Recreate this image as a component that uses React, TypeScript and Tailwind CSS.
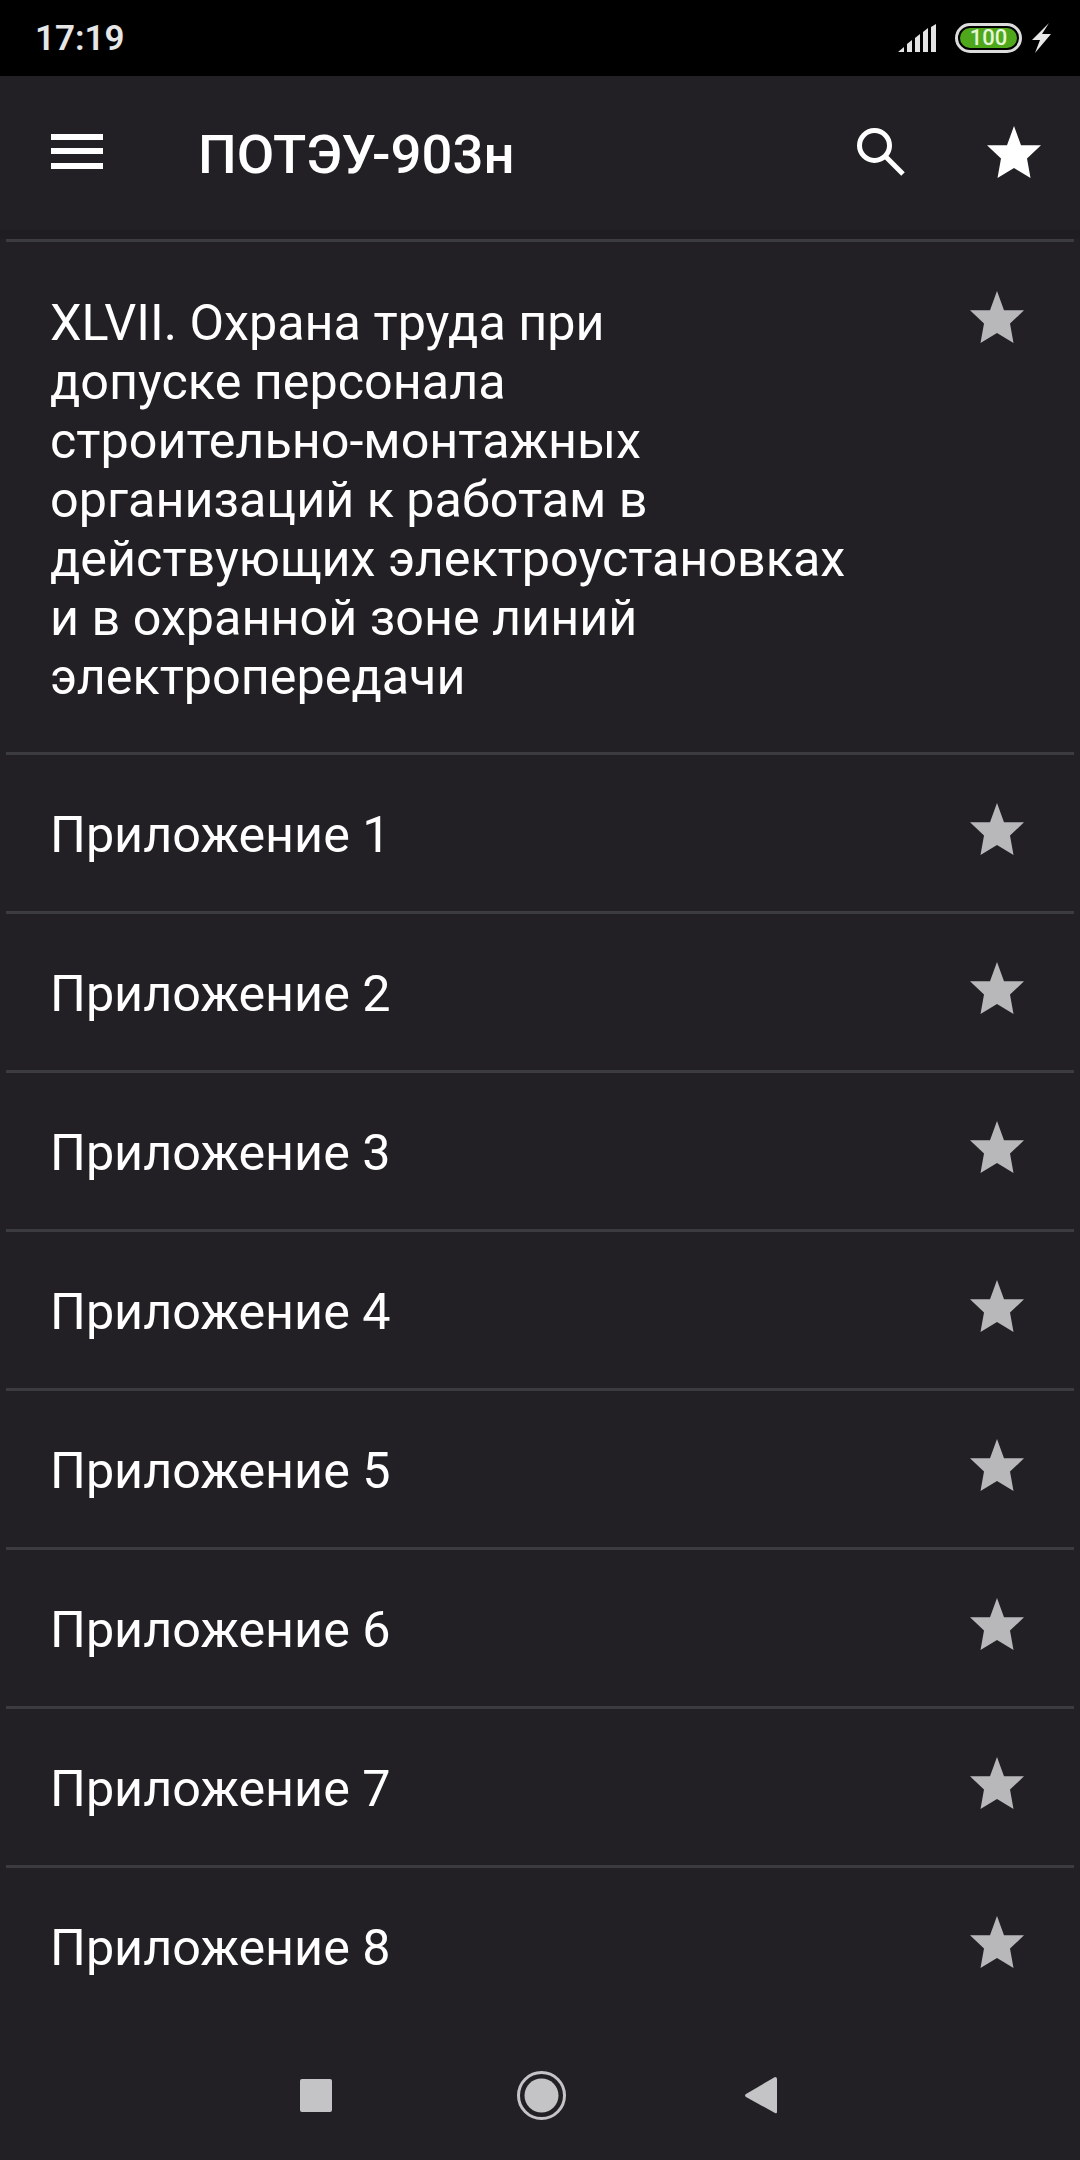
const rows = [
  'Приложение 1',
  'Приложение 2',
  'Приложение 3',
  'Приложение 4',
  'Приложение 5',
  'Приложение 6',
  'Приложение 7',
  'Приложение 8',
];

const Star = ({ className }: { className: string }) => (
  <svg viewBox="0 0 54 52" className={className} fill="currentColor">
    <path d="M27 0 L34 19.3 L54 19.3 L40 32.6 L43.5 52 L27 42 L10.5 52 L14 32.6 L0 19.3 L20 19.3 Z" />
  </svg>
);

const Row = ({ title, last }: { title: string; last?: boolean }) => (
  <div className={`mx-[6px] flex justify-between border-b-[3px] pb-[47px] pl-[44px] pr-[50px] pt-[48px] ${last ? 'border-transparent' : 'border-[#3c3b3f]'}`}>
    <div className="mt-[2px] w-[800px] text-[50.3px] leading-[59px] text-white">{title}</div>
    <Star className="h-[52px] w-[54px] shrink-0 text-[#b8b7ba]" />
  </div>
);

const App = () => {
  return (
    <div className="flex h-[2160px] w-[1080px] flex-col overflow-hidden bg-[#222024] font-['Roboto',sans-serif]">
      <div className="flex h-[76px] shrink-0 items-center justify-between bg-black pl-[35px] pr-[29px]">
        <span className="text-[35px] font-semibold leading-none text-[#e6e6e6]">17:19</span>
        <div className="flex items-center">
          <svg viewBox="0 0 40 29" className="h-[29px] w-[40px]" fill="#e4e4e4">
            <path d="M0 28 L6 23 V28 Z" />
            <path d="M9 20 L14 16 V28 H9 Z" />
            <path d="M17 14 L22 10 V28 H17 Z" />
            <path d="M25 8 L30 4 V28 H25 Z" />
            <path d="M33 3 L38 0 V28 H33 Z" />
          </svg>
          <div className="ml-[17px] flex h-[30px] w-[67px] items-center justify-center rounded-full border-[3px] border-[#dcdcdc] p-[2px]">
            <div className="flex h-full w-full items-center justify-center rounded-full bg-[#4fa81c] text-[22px] font-medium leading-none text-[#e6f5d8]">
              100
            </div>
          </div>
          <svg viewBox="0 0 19 30" className="ml-[10px] h-[30px] w-[19px]" fill="#e8e8e8">
            <path d="M17 0 L0 17 H8 L3 30 L19 11 H10 Z" />
          </svg>
        </div>
      </div>

      <div className="flex h-[154px] shrink-0 items-center pl-[51px] pr-[39px]">
        <div className="mb-[4px] flex h-[35px] w-[52px] flex-col justify-between">
          <div className="h-[6px] bg-white" />
          <div className="h-[6px] bg-white" />
          <div className="h-[6px] bg-white" />
        </div>
        <h1 className="ml-[95px] mt-[2px] flex-1 text-[54.5px] font-medium leading-none text-white">ПОТЭУ-903н</h1>
        <svg viewBox="0 0 48 48" className="mb-[2px] h-[48px] w-[48px]" fill="none" stroke="white" strokeWidth="5">
          <circle cx="17.5" cy="17.5" r="15" />
          <path d="M28 28 L46 46" />
        </svg>
        <Star className="mb-[2px] ml-[82px] h-[52px] w-[54px] text-white" />
      </div>

      <div className="h-[9px] shrink-0 bg-[#1f1d21]" />
      <div className="mx-[6px] h-[3px] shrink-0 bg-[#3c3b3f]" />

      <div className="flex-1">
        <div className="mx-[6px] flex justify-between border-b-[3px] border-[#3c3b3f] pb-[46px] pl-[44px] pr-[50px] pt-[49px]">
          <div className="mt-[2px] w-[800px] text-[50.3px] leading-[59px] text-white">
            XLVII. Охрана труда при
            <br />
            допуске персонала
            <br />
            строительно-монтажных
            <br />
            организаций к работам в
            <br />
            действующих электроустановках
            <br />
            и в охранной зоне линий
            <br />
            электропередачи
          </div>
          <Star className="h-[52px] w-[54px] shrink-0 text-[#b8b7ba]" />
        </div>
        {rows.map((title, i) => (
          <Row key={title} title={title} last={i === rows.length - 1} />
        ))}
      </div>

      <div className="flex h-[89px] shrink-0 items-start justify-center pr-[3px]">
        <div className="mt-[8px] h-[33px] w-[32px] rounded-[2px] bg-[#c4c3c6]" />
        <svg viewBox="0 0 49 49" className="ml-[185px] h-[49px] w-[49px]">
          <circle cx="24.5" cy="24.5" r="23" fill="none" stroke="#c4c3c6" strokeWidth="3" />
          <circle cx="24.5" cy="24.5" r="17" fill="#c4c3c6" />
        </svg>
        <svg viewBox="0 0 32 37" className="ml-[179px] mt-[6px] h-[37px] w-[32px]" fill="#c4c3c6">
          <path d="M30 0 Q32 0 32 2 V35 Q32 37 30 36 L1 20 Q-1 18.5 1 17 Z" />
        </svg>
      </div>
    </div>
  );
};

export default App;
